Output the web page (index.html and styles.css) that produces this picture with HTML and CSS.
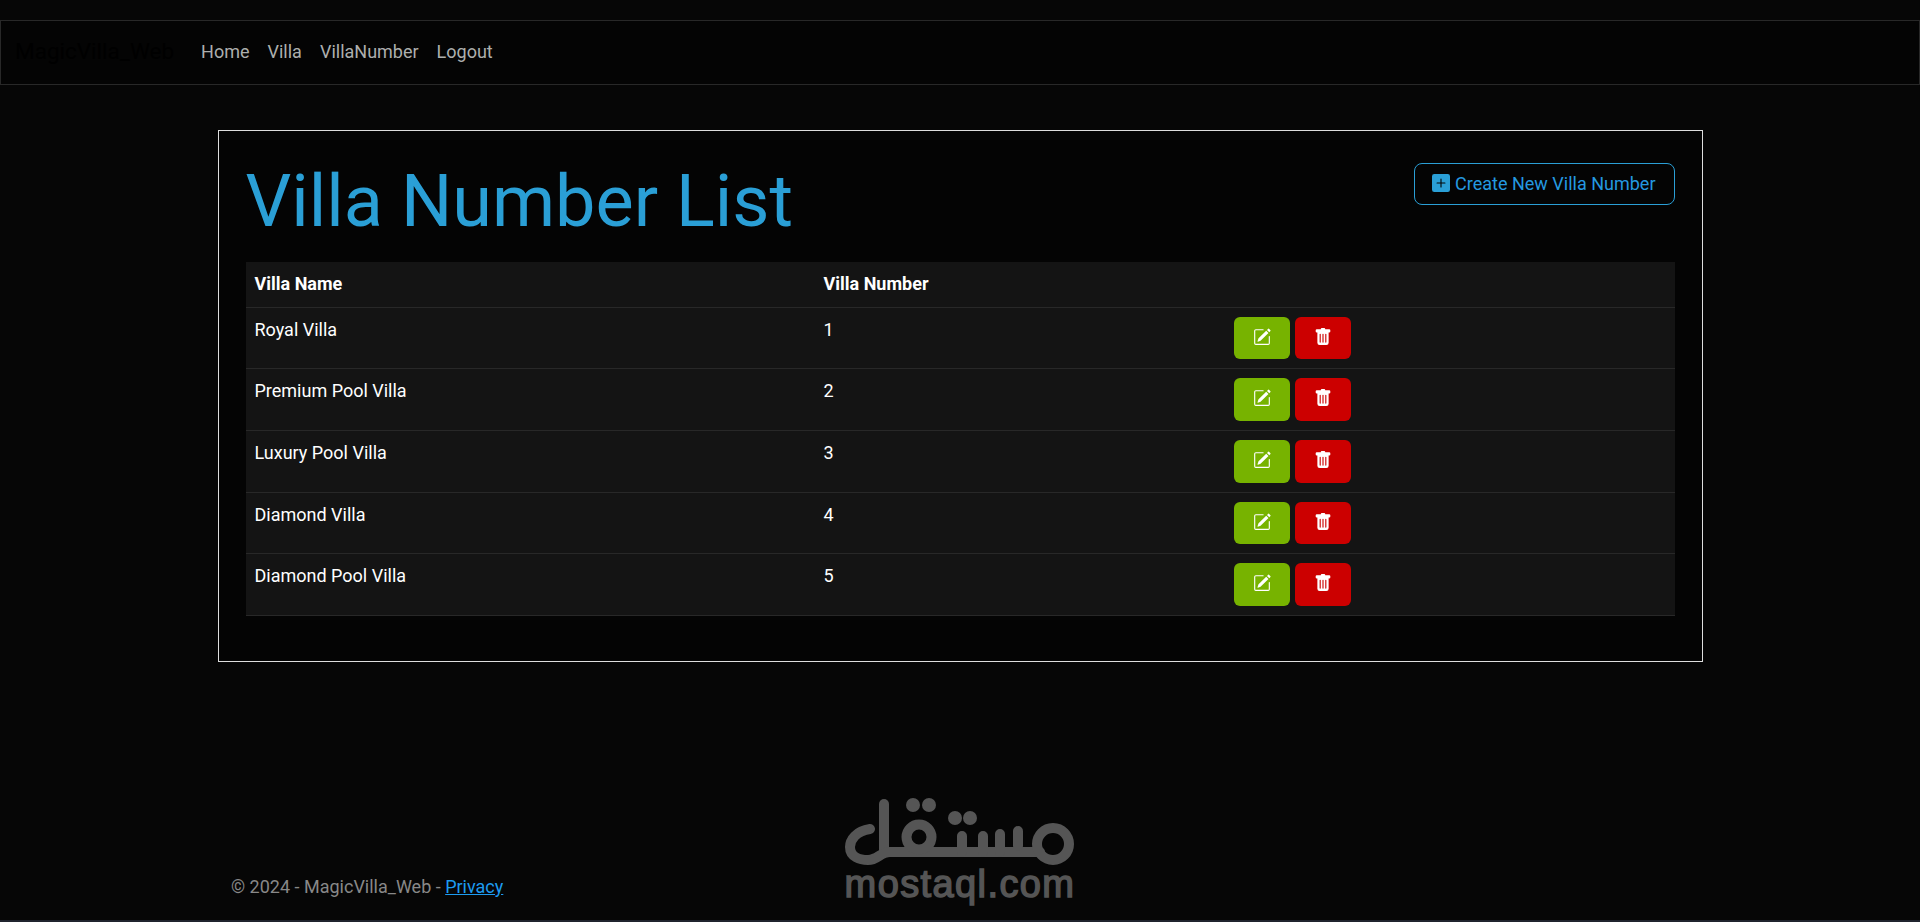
FILE: index.html
```html
<!DOCTYPE html>
<html lang="en">
<head>
  <meta charset="UTF-8">
  <title>Villa Number List - MagicVilla_Web</title>
  <meta name="viewport" content="width=device-width, initial-scale=1.0">
  <link rel="stylesheet" href="styles.css">
</head>
<body>
  <header class="site-header">
    <nav class="navbar">
      <a class="brand" href="#">MagicVilla_Web</a>
      <ul class="nav-links">
        <li><a href="#">Home</a></li>
        <li><a href="#">Villa</a></li>
        <li><a href="#">VillaNumber</a></li>
        <li><a href="#">Logout</a></li>
      </ul>
    </nav>
  </header>

  <main class="list-card">
    <div class="list-head">
      <h1>Villa Number List</h1>
      <a class="btn-create" href="#">
        <svg class="icon-plus" viewBox="0 0 16 16"><path d="M2 0a2 2 0 0 0-2 2v12a2 2 0 0 0 2 2h12a2 2 0 0 0 2-2V2a2 2 0 0 0-2-2H2zm6.5 4.5v3h3a.5.5 0 0 1 0 1h-3v3a.5.5 0 0 1-1 0v-3h-3a.5.5 0 0 1 0-1h3v-3a.5.5 0 0 1 1 0z"/></svg>
        Create New Villa Number
      </a>
    </div>

    <table class="villa-table">
      <colgroup>
        <col class="col-name">
        <col class="col-number">
        <col>
      </colgroup>
      <thead>
        <tr><th>Villa Name</th><th>Villa Number</th><th></th></tr>
      </thead>
      <tbody>
        <tr>
          <td>Royal Villa</td><td>1</td>
          <td><div class="actions">
            <a class="btn-edit" href="#"><svg viewBox="0 0 16 16"><path d="M15.502 1.94a.5.5 0 0 1 0 .706L14.459 3.69l-2-2L13.502.646a.5.5 0 0 1 .707 0l1.293 1.293zm-1.75 2.456-2-2L4.939 9.21a.5.5 0 0 0-.121.196l-.805 2.414a.25.25 0 0 0 .316.316l2.414-.805a.5.5 0 0 0 .196-.12l6.813-6.814z"/><path fill-rule="evenodd" d="M1 13.5A1.5 1.5 0 0 0 2.5 15h11a1.5 1.5 0 0 0 1.5-1.5v-6a.5.5 0 0 0-1 0v6a.5.5 0 0 1-.5.5h-11a.5.5 0 0 1-.5-.5v-11a.5.5 0 0 1 .5-.5H9a.5.5 0 0 0 0-1H2.5A1.5 1.5 0 0 0 1 2.5v11z"/></svg></a>
            <a class="btn-delete" href="#"><svg viewBox="0 0 16 16"><path d="M2.5 1a1 1 0 0 0-1 1v1a1 1 0 0 0 1 1H3v9a2 2 0 0 0 2 2h6a2 2 0 0 0 2-2V4h.5a1 1 0 0 0 1-1V2a1 1 0 0 0-1-1H10a1 1 0 0 0-1-1H7a1 1 0 0 0-1 1H2.5zm3 4a.5.5 0 0 1 .5.5v7a.5.5 0 0 1-1 0v-7a.5.5 0 0 1 .5-.5zM8 5a.5.5 0 0 1 .5.5v7a.5.5 0 0 1-1 0v-7A.5.5 0 0 1 8 5zm3 .5v7a.5.5 0 0 1-1 0v-7a.5.5 0 0 1 1 0z"/></svg></a>
          </div></td>
        </tr>
        <tr>
          <td>Premium Pool Villa</td><td>2</td>
          <td><div class="actions">
            <a class="btn-edit" href="#"><svg viewBox="0 0 16 16"><path d="M15.502 1.94a.5.5 0 0 1 0 .706L14.459 3.69l-2-2L13.502.646a.5.5 0 0 1 .707 0l1.293 1.293zm-1.75 2.456-2-2L4.939 9.21a.5.5 0 0 0-.121.196l-.805 2.414a.25.25 0 0 0 .316.316l2.414-.805a.5.5 0 0 0 .196-.12l6.813-6.814z"/><path fill-rule="evenodd" d="M1 13.5A1.5 1.5 0 0 0 2.5 15h11a1.5 1.5 0 0 0 1.5-1.5v-6a.5.5 0 0 0-1 0v6a.5.5 0 0 1-.5.5h-11a.5.5 0 0 1-.5-.5v-11a.5.5 0 0 1 .5-.5H9a.5.5 0 0 0 0-1H2.5A1.5 1.5 0 0 0 1 2.5v11z"/></svg></a>
            <a class="btn-delete" href="#"><svg viewBox="0 0 16 16"><path d="M2.5 1a1 1 0 0 0-1 1v1a1 1 0 0 0 1 1H3v9a2 2 0 0 0 2 2h6a2 2 0 0 0 2-2V4h.5a1 1 0 0 0 1-1V2a1 1 0 0 0-1-1H10a1 1 0 0 0-1-1H7a1 1 0 0 0-1 1H2.5zm3 4a.5.5 0 0 1 .5.5v7a.5.5 0 0 1-1 0v-7a.5.5 0 0 1 .5-.5zM8 5a.5.5 0 0 1 .5.5v7a.5.5 0 0 1-1 0v-7A.5.5 0 0 1 8 5zm3 .5v7a.5.5 0 0 1-1 0v-7a.5.5 0 0 1 1 0z"/></svg></a>
          </div></td>
        </tr>
        <tr>
          <td>Luxury Pool Villa</td><td>3</td>
          <td><div class="actions">
            <a class="btn-edit" href="#"><svg viewBox="0 0 16 16"><path d="M15.502 1.94a.5.5 0 0 1 0 .706L14.459 3.69l-2-2L13.502.646a.5.5 0 0 1 .707 0l1.293 1.293zm-1.75 2.456-2-2L4.939 9.21a.5.5 0 0 0-.121.196l-.805 2.414a.25.25 0 0 0 .316.316l2.414-.805a.5.5 0 0 0 .196-.12l6.813-6.814z"/><path fill-rule="evenodd" d="M1 13.5A1.5 1.5 0 0 0 2.5 15h11a1.5 1.5 0 0 0 1.5-1.5v-6a.5.5 0 0 0-1 0v6a.5.5 0 0 1-.5.5h-11a.5.5 0 0 1-.5-.5v-11a.5.5 0 0 1 .5-.5H9a.5.5 0 0 0 0-1H2.5A1.5 1.5 0 0 0 1 2.5v11z"/></svg></a>
            <a class="btn-delete" href="#"><svg viewBox="0 0 16 16"><path d="M2.5 1a1 1 0 0 0-1 1v1a1 1 0 0 0 1 1H3v9a2 2 0 0 0 2 2h6a2 2 0 0 0 2-2V4h.5a1 1 0 0 0 1-1V2a1 1 0 0 0-1-1H10a1 1 0 0 0-1-1H7a1 1 0 0 0-1 1H2.5zm3 4a.5.5 0 0 1 .5.5v7a.5.5 0 0 1-1 0v-7a.5.5 0 0 1 .5-.5zM8 5a.5.5 0 0 1 .5.5v7a.5.5 0 0 1-1 0v-7A.5.5 0 0 1 8 5zm3 .5v7a.5.5 0 0 1-1 0v-7a.5.5 0 0 1 1 0z"/></svg></a>
          </div></td>
        </tr>
        <tr>
          <td>Diamond Villa</td><td>4</td>
          <td><div class="actions">
            <a class="btn-edit" href="#"><svg viewBox="0 0 16 16"><path d="M15.502 1.94a.5.5 0 0 1 0 .706L14.459 3.69l-2-2L13.502.646a.5.5 0 0 1 .707 0l1.293 1.293zm-1.75 2.456-2-2L4.939 9.21a.5.5 0 0 0-.121.196l-.805 2.414a.25.25 0 0 0 .316.316l2.414-.805a.5.5 0 0 0 .196-.12l6.813-6.814z"/><path fill-rule="evenodd" d="M1 13.5A1.5 1.5 0 0 0 2.5 15h11a1.5 1.5 0 0 0 1.5-1.5v-6a.5.5 0 0 0-1 0v6a.5.5 0 0 1-.5.5h-11a.5.5 0 0 1-.5-.5v-11a.5.5 0 0 1 .5-.5H9a.5.5 0 0 0 0-1H2.5A1.5 1.5 0 0 0 1 2.5v11z"/></svg></a>
            <a class="btn-delete" href="#"><svg viewBox="0 0 16 16"><path d="M2.5 1a1 1 0 0 0-1 1v1a1 1 0 0 0 1 1H3v9a2 2 0 0 0 2 2h6a2 2 0 0 0 2-2V4h.5a1 1 0 0 0 1-1V2a1 1 0 0 0-1-1H10a1 1 0 0 0-1-1H7a1 1 0 0 0-1 1H2.5zm3 4a.5.5 0 0 1 .5.5v7a.5.5 0 0 1-1 0v-7a.5.5 0 0 1 .5-.5zM8 5a.5.5 0 0 1 .5.5v7a.5.5 0 0 1-1 0v-7A.5.5 0 0 1 8 5zm3 .5v7a.5.5 0 0 1-1 0v-7a.5.5 0 0 1 1 0z"/></svg></a>
          </div></td>
        </tr>
        <tr>
          <td>Diamond Pool Villa</td><td>5</td>
          <td><div class="actions">
            <a class="btn-edit" href="#"><svg viewBox="0 0 16 16"><path d="M15.502 1.94a.5.5 0 0 1 0 .706L14.459 3.69l-2-2L13.502.646a.5.5 0 0 1 .707 0l1.293 1.293zm-1.75 2.456-2-2L4.939 9.21a.5.5 0 0 0-.121.196l-.805 2.414a.25.25 0 0 0 .316.316l2.414-.805a.5.5 0 0 0 .196-.12l6.813-6.814z"/><path fill-rule="evenodd" d="M1 13.5A1.5 1.5 0 0 0 2.5 15h11a1.5 1.5 0 0 0 1.5-1.5v-6a.5.5 0 0 0-1 0v6a.5.5 0 0 1-.5.5h-11a.5.5 0 0 1-.5-.5v-11a.5.5 0 0 1 .5-.5H9a.5.5 0 0 0 0-1H2.5A1.5 1.5 0 0 0 1 2.5v11z"/></svg></a>
            <a class="btn-delete" href="#"><svg viewBox="0 0 16 16"><path d="M2.5 1a1 1 0 0 0-1 1v1a1 1 0 0 0 1 1H3v9a2 2 0 0 0 2 2h6a2 2 0 0 0 2-2V4h.5a1 1 0 0 0 1-1V2a1 1 0 0 0-1-1H10a1 1 0 0 0-1-1H7a1 1 0 0 0-1 1H2.5zm3 4a.5.5 0 0 1 .5.5v7a.5.5 0 0 1-1 0v-7a.5.5 0 0 1 .5-.5zM8 5a.5.5 0 0 1 .5.5v7a.5.5 0 0 1-1 0v-7A.5.5 0 0 1 8 5zm3 .5v7a.5.5 0 0 1-1 0v-7a.5.5 0 0 1 1 0z"/></svg></a>
          </div></td>
        </tr>
      </tbody>
    </table>
  </main>

  <footer class="site-footer">
    &copy; 2024 - MagicVilla_Web - <a href="#">Privacy</a>
  </footer>

  <!-- watermark sits over the page -->
  <div class="watermark">
    <svg class="watermark-logo" viewBox="0 0 240 76" aria-label="mostaql logo">
      <g fill="none" stroke="#555" stroke-width="10" stroke-linecap="round">
        <path d="M44 10V58"/>
        <path d="M30 35C16 37 10 46 10 53C10 63 20 66 28 66C38 66 40 58 50 58H200"/>
        <circle cx="79" cy="43" r="12.5"/>
        <path d="M122 42V58M143 42V58M160 40V58M178 37V52"/>
        <circle cx="213" cy="50" r="16"/>
      </g>
      <g fill="#555">
        <circle cx="73" cy="11" r="7"/>
        <circle cx="89" cy="11" r="7"/>
        <circle cx="115" cy="24" r="7"/>
        <circle cx="130" cy="24" r="7"/>
      </g>
    </svg>
    <div class="watermark-text">mostaql.com</div>
  </div>
</body>
</html>
```

FILE: styles.css
```css
* {
  margin: 0;
  padding: 0;
  box-sizing: border-box;
}
body {
  display: flex;
  flex-direction: column;
  min-height: 100vh;
  background: #060606;
  color: #adafae;
  font-family: Roboto, "Liberation Sans", sans-serif;
  font-size: 18px;
  line-height: 1.5;
  border-bottom: 2px solid #20242e;
}
a {
  text-decoration: none;
}

/* top bar */
.site-header {
  padding-top: 20px;
}
.navbar {
  display: flex;
  align-items: center;
  height: 65px;
  padding: 0 14px 2px;
  background: #040404;
  border: 1px solid #282828;
}
.brand {
  color: #000;
  font-size: 22.5px;
  margin-right: 18px;
}
.nav-links {
  display: flex;
  list-style: none;
}
.nav-links a {
  display: block;
  padding: 9px;
  color: #adafae;
}

/* card */
.list-card {
  width: 1485px;
  margin: 45px auto 0;
  padding: 28px 27px 45px;
  background: #040404;
  border: 1px solid #dedede;
}
.list-head {
  display: flex;
  justify-content: space-between;
  align-items: flex-start;
  margin-bottom: 17px;
}
.list-head h1 {
  color: #2a9fd6;
  font-size: 72px;
  font-weight: 400;
  line-height: 1.2;
}
.btn-create {
  display: flex;
  align-items: center;
  gap: 5px;
  height: 42px;
  margin-top: 4px;
  padding: 0 18px 2px 17px;
  color: #2499e0;
  border: 1px solid #2a9fd6;
  border-radius: 8px;
}
.icon-plus {
  width: 18px;
  height: 18px;
  fill: #2a9fd6;
}

/* table */
.villa-table {
  width: 100%;
  border-collapse: collapse;
  table-layout: fixed;
  background: #141414;
  color: #fff;
}
.col-name {
  width: 569px;
}
.col-number {
  width: 411px;
}
.villa-table th,
.villa-table td {
  text-align: left;
  vertical-align: top;
  border-bottom: 1px solid #282828;
}
.villa-table th {
  height: 45px;
  padding: 8px 9px;
  font-weight: 700;
}
.villa-table td {
  height: 61.6px;
  padding: 8px 9px 0;
}
.villa-table td:last-child {
  padding: 9px 8px 0;
}
.actions {
  display: flex;
  gap: 5px;
}
.btn-edit,
.btn-delete {
  display: flex;
  justify-content: center;
  width: 56px;
  height: 42.6px;
  padding-top: 11px;
  border-radius: 6px;
  color: #fff;
}
.btn-edit {
  background: #77b300;
}
.btn-delete {
  background: #c00;
}
.actions svg {
  width: 18px;
  height: 18px;
  fill: currentColor;
}

/* footer */
.site-footer {
  margin-top: auto;
  padding: 0 0 20px 231px;
  color: #888;
}
.site-footer a {
  color: #1d9bf0;
  text-decoration: underline;
}

/* mostaql watermark */
.watermark {
  position: absolute;
  top: 794px;
  left: 840px;
  width: 240px;
}
.watermark-logo {
  display: block;
  width: 240px;
  height: 76px;
}
.watermark-text {
  margin-top: -4px;
  color: #555;
  font-family: "Liberation Sans", sans-serif;
  font-size: 38px;
  line-height: 36px;
  letter-spacing: 1.4px;
  text-align: center;
  -webkit-text-stroke: 1.5px #555;
}
```
